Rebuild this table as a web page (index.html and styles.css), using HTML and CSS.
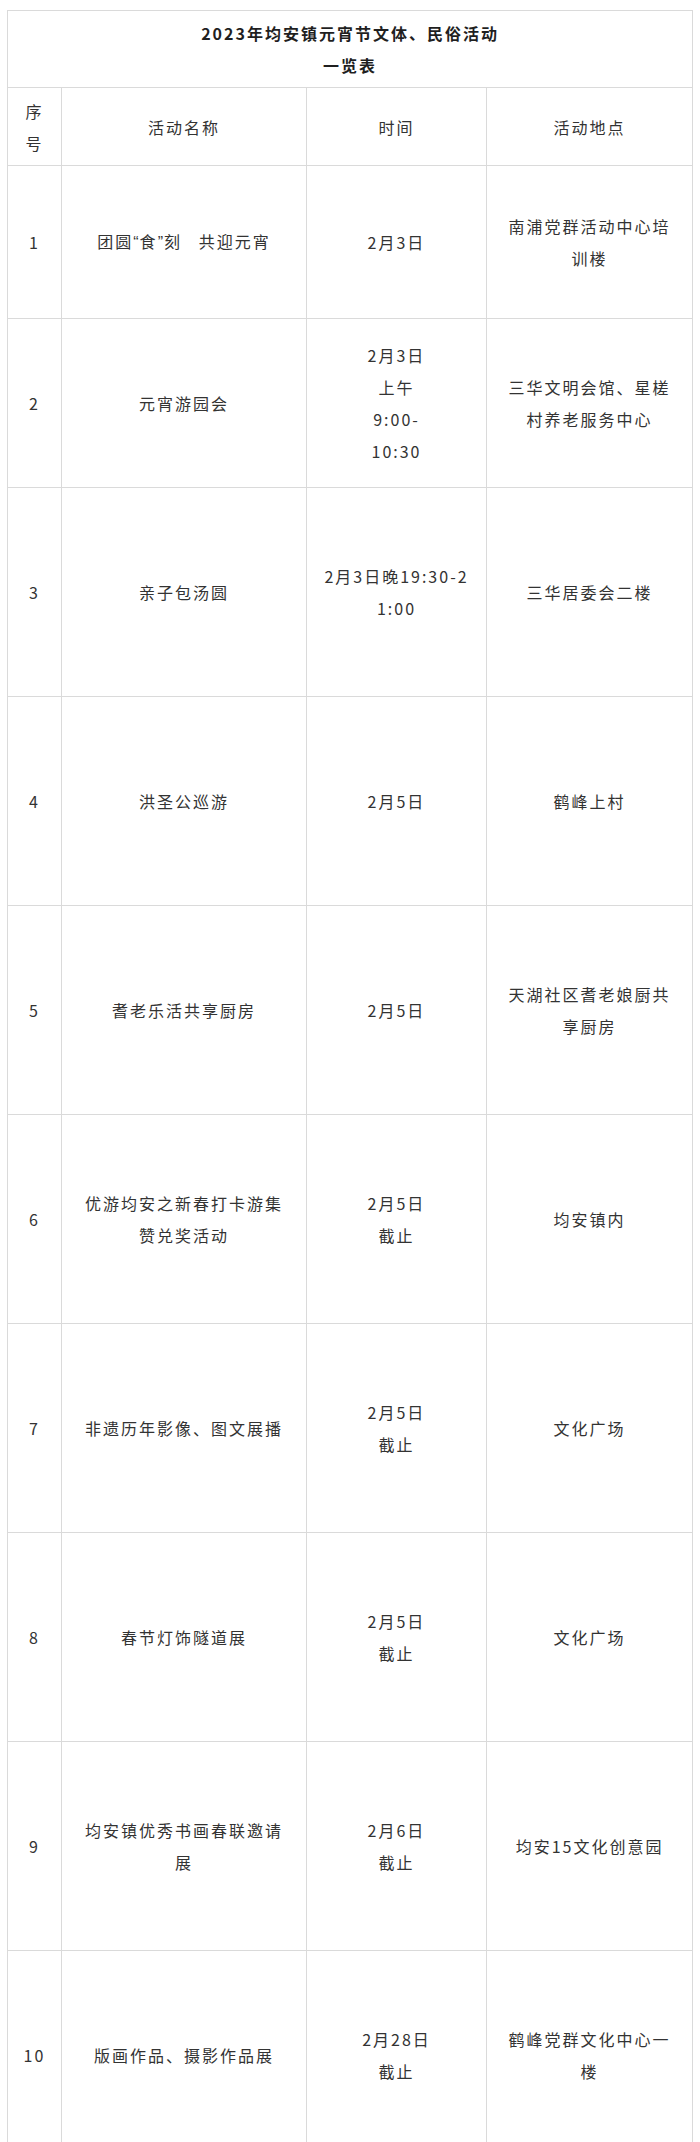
FILE: index.html
```html
<!DOCTYPE html>
<html lang="zh-CN">
<head>
<meta charset="utf-8">
<title>2023年均安镇元宵节文体、民俗活动一览表</title>
<link rel="stylesheet" href="styles.css">
</head>
<body>
<div class="page">
<table class="events">
  <colgroup>
    <col class="c-no">
    <col class="c-name">
    <col class="c-time">
    <col class="c-place">
  </colgroup>
  <tr class="r-title">
    <td colspan="4" class="title">2023年均安镇元宵节文体、民俗活动<br>一览表</td>
  </tr>
  <tr class="r-head">
    <td>序<br>号</td>
    <td>活动名称</td>
    <td>时间</td>
    <td>活动地点</td>
  </tr>
  <tr class="r-1">
    <td>1</td>
    <td>团圆<span class="q">“</span>食<span class="q">”</span>刻&nbsp;&nbsp;&nbsp;共迎元宵</td>
    <td>2月3日</td>
    <td>南浦党群活动中心培<br>训楼</td>
  </tr>
  <tr class="r-2">
    <td>2</td>
    <td>元宵游园会</td>
    <td>2月3日<br>上午<br>9:00-<br>10:30</td>
    <td>三华文明会馆、星槎<br>村养老服务中心</td>
  </tr>
  <tr class="r-n">
    <td>3</td>
    <td>亲子包汤圆</td>
    <td>2月3日晚19:30-2<br>1:00</td>
    <td>三华居委会二楼</td>
  </tr>
  <tr class="r-n">
    <td>4</td>
    <td>洪圣公巡游</td>
    <td>2月5日</td>
    <td>鹤峰上村</td>
  </tr>
  <tr class="r-n">
    <td>5</td>
    <td>耆老乐活共享厨房</td>
    <td>2月5日</td>
    <td>天湖社区耆老娘厨共<br>享厨房</td>
  </tr>
  <tr class="r-n">
    <td>6</td>
    <td>优游均安之新春打卡游集<br>赞兑奖活动</td>
    <td>2月5日<br>截止</td>
    <td>均安镇内</td>
  </tr>
  <tr class="r-n">
    <td>7</td>
    <td>非遗历年影像、图文展播</td>
    <td>2月5日<br>截止</td>
    <td>文化广场</td>
  </tr>
  <tr class="r-n">
    <td>8</td>
    <td>春节灯饰隧道展</td>
    <td>2月5日<br>截止</td>
    <td>文化广场</td>
  </tr>
  <tr class="r-n">
    <td>9</td>
    <td>均安镇优秀书画春联邀请<br>展</td>
    <td>2月6日<br>截止</td>
    <td>均安15文化创意园</td>
  </tr>
  <tr class="r-n">
    <td>10</td>
    <td>版画作品、摄影作品展</td>
    <td>2月28日<br>截止</td>
    <td>鹤峰党群文化中心一<br>楼</td>
  </tr>
</table>
</div>
</body>
</html>
```
FILE: styles.css
```css
html, body {
  margin: 0;
  padding: 0;
  background: #ffffff;
}

.page {
  padding: 10px 8px 0 7px;
}

.events {
  width: 685px;
  table-layout: fixed;
  border-collapse: collapse;
  font-family: "Noto Sans CJK SC", "Microsoft YaHei", sans-serif;
  font-size: 16px;
  line-height: 32px;
  letter-spacing: 2px;
  color: #333333;
}

.c-no { width: 54px; }
.c-name { width: 245px; }
.c-time { width: 180px; }
.c-place { width: 206px; }

.events td {
  border: 1px solid #dadada;
  padding: 0 4px;
  text-align: center;
  vertical-align: middle;
  white-space: nowrap;
  overflow: hidden;
  box-sizing: border-box;
}

.events td.title {
  font-weight: bold;
  color: #1f1f1f;
}

.q {
  font-family: "Liberation Sans", sans-serif;
  letter-spacing: 1px;
}

.r-title td { height: 77px; }
.r-head td { height: 78px; }
.r-1 td { height: 153px; }
.r-2 td { height: 169px; }
.r-n td { height: 209px; }
```
